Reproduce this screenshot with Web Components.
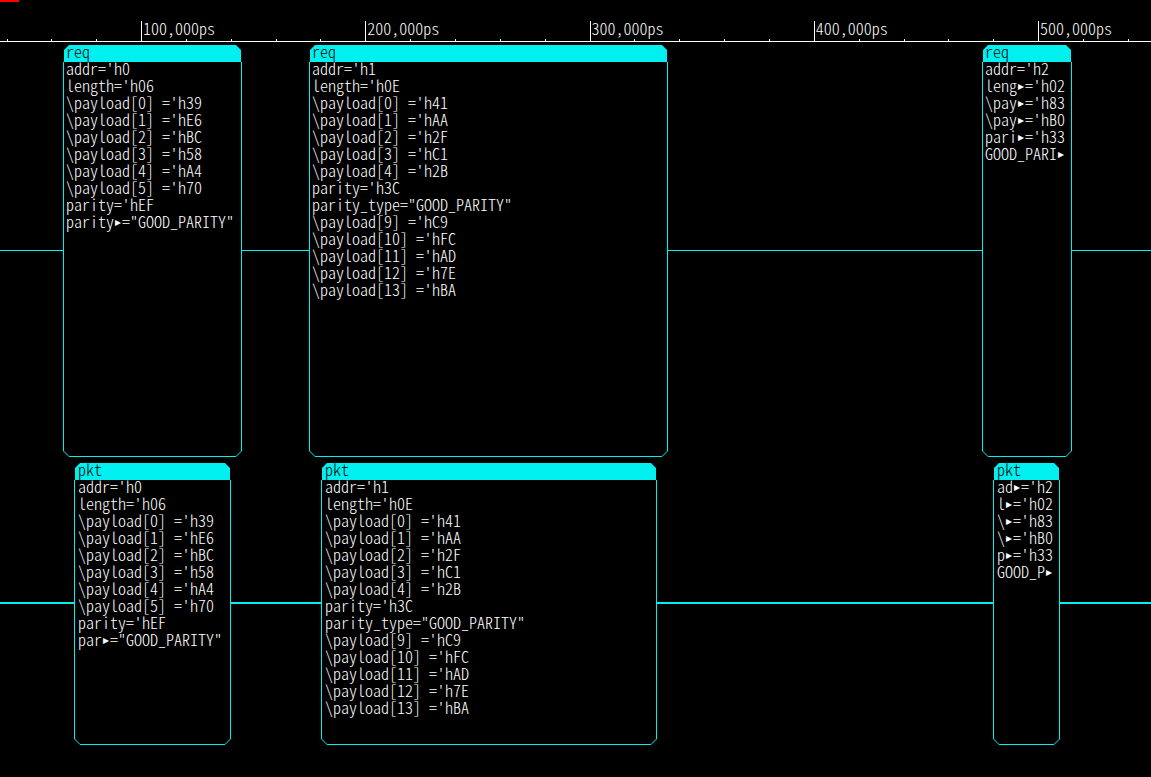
<!DOCTYPE html>
<html lang="en">
<head>
<meta charset="utf-8">
<title>Transaction waveform</title>
<style>
  html { background: #000; }
  body { margin: 0; background: #000; color: #fff; }
</style>
</head>
<body>
<wave-view></wave-view>
<script>
const attach = (el, html) => {
  const t = document.createElement('template');
  t.innerHTML = html;
  el.attachShadow({ mode: 'open' }).append(t.content.cloneNode(true));
  return el.shadowRoot;
};

/* Time axis: a short tick every 20,000ps, a tall labelled one every 100,000ps. */
class TimeRuler extends HTMLElement {
  connectedCallback() {
    let cells = '';
    for (let k = 0; k < 26; k++) {
      const major = k % 5 === 3;
      const label = ((k - 3) / 5 + 1) * 100 + ',000ps';
      cells += `<div class="cell${major ? ' major' : ''}">${major ? `<span>${label}</span>` : ''}</div>`;
    }
    attach(this, `<style>
      :host { display: block; overflow: hidden; border-bottom: 1px solid #fff; }
      .marker { width: 19px; height: 2px; background: #f00; }
      .axis { display: grid; grid-template-columns: 655fr repeat(25, minmax(0, 4485fr)) minmax(0, 2320fr);
              align-items: end; height: 39px; }
      .cell { border-left: 1px solid #fff; height: 2px; min-width: 0; }
      .major { height: 20px; }
      span { display: block; padding-left: 1px; line-height: 15px; white-space: nowrap; }
    </style>
    <div class="marker"></div>
    <div class="axis"><div></div>${cells}</div>`);
  }
}
customElements.define('time-ruler', TimeRuler);

/* One transaction: filled title strip over an outlined, chamfered body. */
class TransactionBox extends HTMLElement {
  connectedCallback() {
    attach(this, `<style>
      :host { display: flex; flex-direction: column; min-width: 0; color: #fff; }
      header { margin: 0 1px; padding-left: var(--inset); background: #00f0f0; color: #000;
               height: 17px; line-height: 13px;
               clip-path: polygon(0 5px, 5px 0, calc(100% - 5px) 0, 100% 5px, 100% 100%, 0 100%); }
      .body { flex: 1; border: solid #00f0f0; border-width: 0 1px; padding-left: var(--inset); }
      footer { display: flex; height: 6px; }
      footer i { flex: 1; box-sizing: border-box; border-bottom: 1px solid #00f0f0; }
      svg { display: block; flex: none; }
      path { fill: none; stroke: #00f0f0; }
    </style>
    <header><slot name="title"></slot></header>
    <div class="body"><slot></slot></div>
    <footer>
      <svg width="6" height="6"><path d="M.5 0L6 5.5"/></svg><i></i>
      <svg width="6" height="6"><path d="M5.5 0L0 5.5"/></svg>
    </footer>`);
  }
}
customElements.define('transaction-box', TransactionBox);

/* One attribute line; ">" in the text attribute marks where a name is cut short. */
class AttrLine extends HTMLElement {
  connectedCallback() {
    attach(this, `<style>
      :host { display: block; height: 17px; line-height: 13px; white-space: pre; }
      b { display: inline-block; width: 8px; height: 13px; vertical-align: top; text-align: center;
          font: 12px/14px "DejaVu Sans", sans-serif; }
    </style>${this.getAttribute('text').replace(/>/g, '<b>▸</b>')}`);
  }
}
customElements.define('attr-line', AttrLine);

const boxHTML = (title, lines) =>
  `<transaction-box><span slot="title">${title}</span>${lines.map(l =>
    `<attr-line text="${l.replace(/"/g, '&quot;')}"></attr-line>`).join('')}</transaction-box>`;

/* A stream: transactions joined by the idle line. */
class StreamLane extends HTMLElement {
  set data({ title, boxes }) {
    const wire = '<div class="wire"></div>';
    attach(this, `<style>
      :host { display: grid; }
      .wire { align-self: center; height: var(--wire); margin-bottom: 2px; background: #00f0f0; }
    </style>${wire}${boxes.map(b => boxHTML(title, b) + wire).join('')}`);
  }
}
customElements.define('stream-lane', StreamLane);

const payload = list => list.map(([i, v]) => `\\payload[${i}] ='h${v}`);
const first = ["addr='h0", "length='h06",
  ...payload([[0, '39'], [1, 'E6'], [2, 'BC'], [3, '58'], [4, 'A4'], [5, '70']]), "parity='hEF"];
const second = ["addr='h1", "length='h0E",
  ...payload([[0, '41'], [1, 'AA'], [2, '2F'], [3, 'C1'], [4, '2B']]),
  "parity='h3C", 'parity_type="GOOD_PARITY"',
  ...payload([[9, 'C9'], [10, 'FC'], [11, 'AD'], [12, '7E'], [13, 'BA']])];

class WaveView extends HTMLElement {
  connectedCallback() {
    const root = attach(this, `<style>
      :host { display: block; overflow: hidden; background: #000; color: #fff;
              font-family: "Noto Sans CJK JP", "Noto Sans Mono CJK JP", "Liberation Mono", monospace;
              font-size: 16px; font-weight: 300; font-feature-settings: "hwid" 1, "kern" 0; }
      main { display: grid; gap: 6px; padding: 3px 0 32px; }
      .req { --inset: 2px; --wire: 1px; min-height: 412px;
             grid-template-columns: 63fr 179fr 67fr 359fr 314fr 90fr 79fr; }
      .pkt { --inset: 3px; --wire: 2px; min-height: 282px;
             grid-template-columns: 74fr 157fr 90fr 336fr 336fr 67fr 91fr; }
    </style>
    <time-ruler></time-ruler>
    <main><stream-lane class="req"></stream-lane><stream-lane class="pkt"></stream-lane></main>`);
    root.querySelector('.req').data = { title: 'req', boxes: [
      [...first, 'parity>="GOOD_PARITY"'], second,
      ["addr='h2", "leng>='h02", "\\pay>='h83", "\\pay>='hB0", "pari>='h33", 'GOOD_PARI>']] };
    root.querySelector('.pkt').data = { title: 'pkt', boxes: [
      [...first, 'par>="GOOD_PARITY"'], second,
      ["ad>='h2", "l>='h02", "\\>='h83", "\\>='hB0", "p>='h33", 'GOOD_P>']] };
  }
}
customElements.define('wave-view', WaveView);
</script>
</body>
</html>
